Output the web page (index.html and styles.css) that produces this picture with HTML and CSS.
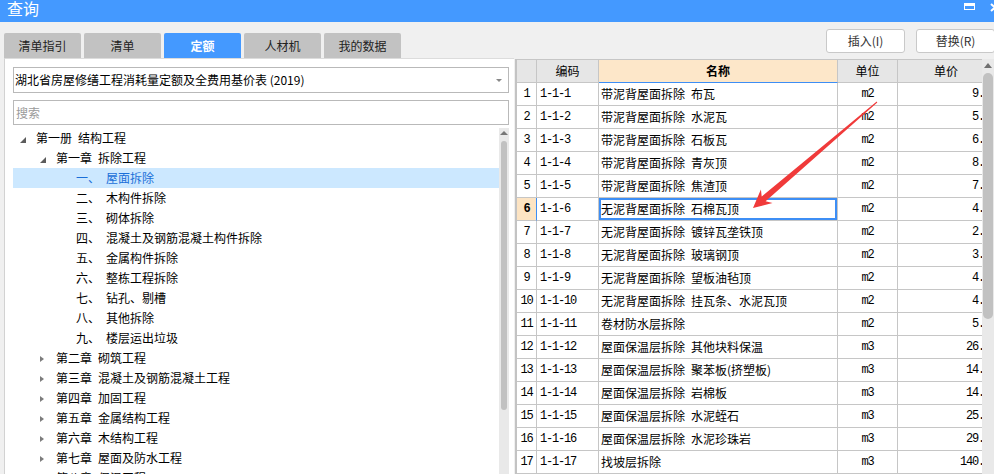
FILE: index.html
```html
<!DOCTYPE html>
<html lang="zh-CN">
<head>
<meta charset="utf-8">
<title>查询</title>
<link rel="stylesheet" href="styles.css">
</head>
<body>
<div class="window">
  <header class="titlebar">
    <span class="title">查询</span>
    <span class="win-btns">
      <span class="btn-max"></span>
      <svg class="btn-close" viewBox="0 0 10 9"><path d="M1 1 L9 8 M9 1 L1 8" stroke="#fff" stroke-width="2"/></svg>
    </span>
  </header>
  <div class="main">
    <section class="left">
      <nav class="tabs">
        <div class="tab">清单指引</div>
        <div class="tab">清单</div>
        <div class="tab active">定额</div>
        <div class="tab">人材机</div>
        <div class="tab">我的数据</div>
      </nav>
      <div class="panel">
        <div class="select"><span>湖北省房屋修缮工程消耗量定额及全费用基价表 (2019)</span><span class="caret"></span></div>
        <div class="search">搜索</div>
        <div class="tree-wrap">
          <ul class="tree">
            <li class="l0"><i class="tg open"></i><span class="k">第一册</span>结构工程</li>
            <li class="l1"><i class="tg open"></i><span class="k">第一章</span>拆除工程</li>
            <li class="l2 sel"><i class="tg"></i><span class="no">一、</span>屋面拆除</li>
            <li class="l2"><i class="tg"></i><span class="no">二、</span>木构件拆除</li>
            <li class="l2"><i class="tg"></i><span class="no">三、</span>砌体拆除</li>
            <li class="l2"><i class="tg"></i><span class="no">四、</span>混凝土及钢筋混凝土构件拆除</li>
            <li class="l2"><i class="tg"></i><span class="no">五、</span>金属构件拆除</li>
            <li class="l2"><i class="tg"></i><span class="no">六、</span>整栋工程拆除</li>
            <li class="l2"><i class="tg"></i><span class="no">七、</span>钻孔、剔槽</li>
            <li class="l2"><i class="tg"></i><span class="no">八、</span>其他拆除</li>
            <li class="l2"><i class="tg"></i><span class="no">九、</span>楼层运出垃圾</li>
            <li class="l1"><i class="tg closed"></i><span class="k">第二章</span>砌筑工程</li>
            <li class="l1"><i class="tg closed"></i><span class="k">第三章</span>混凝土及钢筋混凝土工程</li>
            <li class="l1"><i class="tg closed"></i><span class="k">第四章</span>加固工程</li>
            <li class="l1"><i class="tg closed"></i><span class="k">第五章</span>金属结构工程</li>
            <li class="l1"><i class="tg closed"></i><span class="k">第六章</span>木结构工程</li>
            <li class="l1"><i class="tg closed"></i><span class="k">第七章</span>屋面及防水工程</li>
            <li class="l1"><i class="tg closed"></i><span class="k">第八章</span>保温工程</li>
          </ul>
          <div class="vscroll">
            <span class="up"></span>
            <span class="thumb"></span>
          </div>
        </div>
      </div>
    </section>
    <section class="right">
      <div class="actions">
        <button class="btn">插入(I)</button>
        <button class="btn">替换(R)</button>
      </div>
      <div class="grid-area">
        <div class="grid-clip">
          <table class="grid">
            <colgroup>
              <col class="w-no"><col class="w-code"><col class="w-name"><col class="w-unit"><col class="w-price">
            </colgroup>
            <thead>
              <tr><th></th><th>编码</th><th class="hl">名称</th><th>单位</th><th class="ph">单价</th></tr>
            </thead>
            <tbody>
              <tr><td class="no">1</td><td class="code">1-1-1</td><td class="name"><span class="k">带泥背屋面拆除</span>布瓦</td><td class="unit">m2</td><td class="price">9.93</td></tr>
              <tr><td class="no">2</td><td class="code">1-1-2</td><td class="name"><span class="k">带泥背屋面拆除</span>水泥瓦</td><td class="unit">m2</td><td class="price">5.92</td></tr>
              <tr><td class="no">3</td><td class="code">1-1-3</td><td class="name"><span class="k">带泥背屋面拆除</span>石板瓦</td><td class="unit">m2</td><td class="price">6.85</td></tr>
              <tr><td class="no">4</td><td class="code">1-1-4</td><td class="name"><span class="k">带泥背屋面拆除</span>青灰顶</td><td class="unit">m2</td><td class="price">8.47</td></tr>
              <tr><td class="no">5</td><td class="code">1-1-5</td><td class="name"><span class="k">带泥背屋面拆除</span>焦渣顶</td><td class="unit">m2</td><td class="price">7.96</td></tr>
              <tr><td class="no cur">6</td><td class="code">1-1-6</td><td class="name sel"><span class="k">无泥背屋面拆除</span>石棉瓦顶</td><td class="unit">m2</td><td class="price">4.05</td></tr>
              <tr><td class="no">7</td><td class="code">1-1-7</td><td class="name"><span class="k">无泥背屋面拆除</span>镀锌瓦垄铁顶</td><td class="unit">m2</td><td class="price">2.98</td></tr>
              <tr><td class="no">8</td><td class="code">1-1-8</td><td class="name"><span class="k">无泥背屋面拆除</span>玻璃钢顶</td><td class="unit">m2</td><td class="price">3.47</td></tr>
              <tr><td class="no">9</td><td class="code">1-1-9</td><td class="name"><span class="k">无泥背屋面拆除</span>望板油毡顶</td><td class="unit">m2</td><td class="price">4.48</td></tr>
              <tr><td class="no">10</td><td class="code">1-1-10</td><td class="name"><span class="k">无泥背屋面拆除</span>挂瓦条、水泥瓦顶</td><td class="unit">m2</td><td class="price">4.25</td></tr>
              <tr><td class="no">11</td><td class="code">1-1-11</td><td class="name">卷材防水层拆除</td><td class="unit">m2</td><td class="price">5.06</td></tr>
              <tr><td class="no">12</td><td class="code">1-1-12</td><td class="name"><span class="k">屋面保温层拆除</span>其他块料保温</td><td class="unit">m3</td><td class="price">26.04</td></tr>
              <tr><td class="no">13</td><td class="code">1-1-13</td><td class="name"><span class="k">屋面保温层拆除</span>聚苯板(挤塑板)</td><td class="unit">m3</td><td class="price">14.31</td></tr>
              <tr><td class="no">14</td><td class="code">1-1-14</td><td class="name"><span class="k">屋面保温层拆除</span>岩棉板</td><td class="unit">m3</td><td class="price">14.62</td></tr>
              <tr><td class="no">15</td><td class="code">1-1-15</td><td class="name"><span class="k">屋面保温层拆除</span>水泥蛭石</td><td class="unit">m3</td><td class="price">25.76</td></tr>
              <tr><td class="no">16</td><td class="code">1-1-16</td><td class="name"><span class="k">屋面保温层拆除</span>水泥珍珠岩</td><td class="unit">m3</td><td class="price">29.03</td></tr>
              <tr><td class="no">17</td><td class="code">1-1-17</td><td class="name">找坡层拆除</td><td class="unit">m3</td><td class="price">140.57</td></tr>
              <tr><td class="no">18</td><td class="code">1-1-18</td><td class="name">找平层拆除</td><td class="unit">m2</td><td class="price">8.12</td></tr>
            </tbody>
          </table>
        </div>
        <div class="vscroll wide">
          <span class="up"></span>
          <span class="thumb"></span>
        </div>
      </div>
    </section>
  </div>
  <svg class="arrow" viewBox="0 0 994 474" width="994" height="474">
    <polygon points="753,208 772.5,203.1 765.6,201.2 877.3,102.4 876.7,101.6 761.7,196.6 760.9,189.5" fill="#f03a3a"/>
  </svg>
</div>
</body>
</html>
```

FILE: styles.css
```css
* { box-sizing: border-box; margin: 0; padding: 0; }
html, body { width: 994px; height: 474px; overflow: hidden; }
body {
  background: #f0f0f0;
  font: 12px/20px "Noto Sans CJK SC", "Noto Sans", sans-serif;
  color: #000;
}
.window { position: relative; width: 994px; height: 474px; display: flex; flex-direction: column; }

.titlebar {
  flex: none; height: 22px; background: #4499ff;
  display: flex; justify-content: space-between; align-items: flex-start;
}
.title { color: #fff; font-size: 16px; line-height: 16px; padding-left: 7px; }
.win-btns { display: flex; align-items: flex-start; gap: 15px; padding-top: 3px; margin-right: -6px; }
.btn-max { width: 11px; height: 7px; border: 1.5px solid #fff; border-top-width: 3px; }
.btn-close { width: 10px; height: 9px; display: block; }

.main { flex: 1; display: flex; min-height: 0; }

.left { width: 514px; flex: none; padding: 11px 0 0 4px; display: flex; flex-direction: column; }
.tabs { display: flex; gap: 3px; height: 25px; flex: none; }
.tab {
  width: 77px; background: #c2c2c2; color: #222; text-align: center;
  line-height: 25px; border-radius: 2px 2px 0 0;
}
.tab.active { background: #4499ff; color: #fff; font-weight: bold; }

.panel {
  flex: 1; min-height: 0; background: #fff;
  border-left: 1px solid #d2d2d2; border-top: 1px solid #dcdcdc;
  padding: 8px 5px 0 8px; display: flex; flex-direction: column;
}
.select {
  flex: none; height: 26px; border: 1px solid #b9b9b9;
  display: flex; align-items: center; justify-content: space-between; padding: 0 6px 0 1px;
  white-space: nowrap;
}
.caret { border-left: 3px solid transparent; border-right: 3px solid transparent; border-top: 3px solid #888; }
.search {
  flex: none; height: 25px; margin-top: 7px; border: 1px solid #b9b9b9;
  color: #9a9a9a; padding-left: 2px; line-height: 23px;
}
.tree-wrap { flex: 1; min-height: 0; display: flex; margin-top: 3px; overflow: hidden; }
.tree { flex: 1; list-style: none; overflow: hidden; }
.tree li { height: 20px; display: flex; align-items: center; white-space: nowrap; color: #000; }
.tree li.l0 { padding-left: 7px; }
.tree li.l1 { padding-left: 27px; }
.tree li.l2 { padding-left: 47px; }
.tree li.sel { background: #cce8ff; color: #1a6fd8; }
.tg { width: 16px; height: 20px; flex: none; display: flex; align-items: center; }
.tg.open::before {
  content: ""; width: 0; height: 0; margin-top: 3px;
  border-style: solid; border-width: 0 0 6px 6px;
  border-color: transparent transparent #5c5c5c transparent;
}
.tg.closed::before {
  content: ""; width: 0; height: 0; margin-top: 1px;
  border-left: 4px solid #7c7c7c; border-top: 3.5px solid transparent; border-bottom: 3.5px solid transparent;
}
.k { margin-right: 6px; }
.tree li .no { margin-right: 6px; }

.vscroll {
  flex: none; width: 10px; background: #e9e9e9;
  display: flex; flex-direction: column; align-items: center; padding-top: 3px;
}
.vscroll .up { border-left: 4px solid transparent; border-right: 4px solid transparent; border-bottom: 4px solid #777; }
.vscroll .thumb { margin-top: 6px; width: 6px; height: 269px; border-radius: 3px; background: #c1c1c1; }
.vscroll.wide { width: 12px; padding-top: 4px; }
.vscroll.wide .up { border-bottom-width: 5px; border-left-width: 4.5px; border-right-width: 4.5px; border-bottom-color: #707070; }
.vscroll.wide .thumb { margin-top: 5px; width: 10px; height: 246px; border-radius: 5px; }

.right { flex: 1; min-width: 0; padding-top: 7px; display: flex; flex-direction: column; }
.actions { flex: none; display: flex; justify-content: flex-end; gap: 11px; height: 24px; margin-right: -1px; }
.btn {
  width: 79px; height: 24px; background: #fff; border: 1px solid #c9c9c9; border-radius: 3px;
  font: 12px/22px "Noto Sans CJK SC", "Noto Sans", sans-serif; color: #333;
}
.grid-area {
  flex: 1; min-height: 0; margin-top: 6px; margin-left: 1px;
  display: flex; border-left: 2px solid #c3c3c3; background: #fff;
}
.grid-clip { flex: 1; min-width: 0; overflow: hidden; }
.grid { width: 484px; table-layout: fixed; border-collapse: separate; border-spacing: 0; border-top: 1px solid #c6c6c6; }
.w-no { width: 20px; }
.w-code { width: 62px; }
.w-name { width: 239px; }
.w-unit { width: 60px; }
.w-price { width: 103px; }
.grid th, .grid td {
  height: 22px; line-height: 22px; padding: 0; white-space: nowrap; overflow: hidden;
  border-right: 1px solid #c6c6c6; border-bottom: 1px solid #c6c6c6;
}
.grid th { background: #e6e6e6; font-weight: normal; text-align: center; }
.grid th.ph { padding-right: 6px; }
.grid th.hl { background: #fde7c9; font-weight: bold; border-bottom-color: #3d8ef5; }
.grid td.no, .grid td.code, .grid td.unit, .grid td.price {
  font-family: "Liberation Mono", "DejaVu Sans Mono", monospace; letter-spacing: -1.2px;
}
.grid td.no { text-align: center; }
.grid td.no.cur { background: #fde4c3; font-weight: bold; border-right-color: #3d8ef5; }
.grid td.code { padding-left: 3px; }
.grid td.name { padding-left: 2px; }
.grid td.name.sel { box-shadow: inset 0 0 0 2px #3d8ef5; }
.grid td.name .k { margin-right: 6px; }
.grid td.unit { text-align: center; }
.grid td.price { text-align: right; padding-right: 4px; }

.arrow { position: absolute; left: 0; top: 0; pointer-events: none; }
```
